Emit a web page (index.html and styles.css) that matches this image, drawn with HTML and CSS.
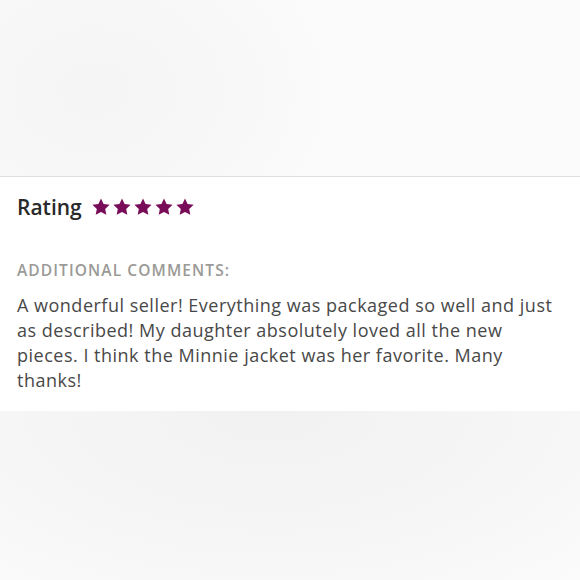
FILE: index.html
```html
<!DOCTYPE html>
<html>
<head>
<meta charset="utf-8">
<link rel="stylesheet" href="styles.css">
</head>
<body>
<div class="page">
  <div class="top"></div>
  <div class="card">
    <div class="rating-row">
      <span class="rating-label">Rating</span>
      <span class="stars">
        <svg class="star" viewBox="0 0 24 24"><path d="M12 1.8l3.1 6.6 7.2.9-5.3 5 1.4 7.1L12 17.9l-6.4 3.5 1.4-7.1-5.3-5 7.2-.9z"/></svg>
        <svg class="star" viewBox="0 0 24 24"><path d="M12 1.8l3.1 6.6 7.2.9-5.3 5 1.4 7.1L12 17.9l-6.4 3.5 1.4-7.1-5.3-5 7.2-.9z"/></svg>
        <svg class="star" viewBox="0 0 24 24"><path d="M12 1.8l3.1 6.6 7.2.9-5.3 5 1.4 7.1L12 17.9l-6.4 3.5 1.4-7.1-5.3-5 7.2-.9z"/></svg>
        <svg class="star" viewBox="0 0 24 24"><path d="M12 1.8l3.1 6.6 7.2.9-5.3 5 1.4 7.1L12 17.9l-6.4 3.5 1.4-7.1-5.3-5 7.2-.9z"/></svg>
        <svg class="star" viewBox="0 0 24 24"><path d="M12 1.8l3.1 6.6 7.2.9-5.3 5 1.4 7.1L12 17.9l-6.4 3.5 1.4-7.1-5.3-5 7.2-.9z"/></svg>
      </span>
    </div>
    <div class="comments-label">ADDITIONAL COMMENTS:</div>
    <p class="comment">A wonderful seller! Everything was packaged so well and just as described! My daughter absolutely loved all the new pieces. I think the Minnie jacket was her favorite. Many thanks!</p>
  </div>
  <div class="bottom"></div>
</div>
</body>
</html>
```

FILE: styles.css
```css
html, body {
  margin: 0;
  padding: 0;
}
body {
  width: 580px;
  height: 580px;
  overflow: hidden;
  font-family: "Open Sans", "Liberation Sans", sans-serif;
  background: #fff;
}
.page {
  display: flex;
  flex-direction: column;
  height: 580px;
}
.top {
  height: 176px;
  background: radial-gradient(ellipse 260px 200px at 95px 90px, #f6f5f5 0%, #f9f8f8 60%, #fcfbfb 100%);
  border-bottom: 1px solid #dedede;
  flex: none;
}
.card {
  background: #fff;
  padding: 14px 17px 0 17px;
  height: 220px;
  flex: none;
}
.rating-row {
  display: flex;
  align-items: center;
  height: 32px;
}
.rating-label {
  font-size: 21px;
  font-weight: 600;
  color: #2a2a2a;
  margin-right: 9px;
}
.stars {
  display: flex;
  gap: 1px;
}
.star {
  width: 20px;
  height: 20px;
  fill: #780c58;
}
.comments-label {
  margin-top: 36px;
  font-size: 15.5px;
  font-weight: 600;
  letter-spacing: 1.1px;
  color: #9a9a96;
}
.comment {
  margin: 12px 0 0 0;
  font-size: 18px;
  letter-spacing: 0.5px;
  line-height: 25px;
  color: #484848;
}
.bottom {
  flex: 1;
  background: radial-gradient(ellipse 520px 260px at 270px 0px, #f1f1f1 0%, #f7f7f7 60%, #fcfcfc 100%);
}
```
